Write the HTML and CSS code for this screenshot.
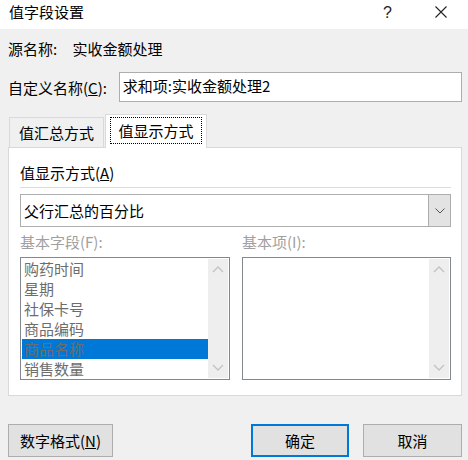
FILE: index.html
```html
<!DOCTYPE html>
<html lang="zh-CN">
<head>
    <meta charset="UTF-8">
    <title>值字段设置</title>
    <link rel="stylesheet" href="styles.css">
</head>
<body>
    <div class="dialog">
        <!-- 标题栏 -->
        <div class="titlebar">
            <span class="title">值字段设置</span>
            <span class="help">?</span>
            <svg class="close" width="12" height="12" viewBox="0 0 12 12">
                <path d="M0.5 0.5 L11.5 11.5 M11.5 0.5 L0.5 11.5" stroke="#222" stroke-width="1.1" fill="none"/>
            </svg>
        </div>

        <div class="content">
            <div class="source-row">
                <span class="source-label">源名称:</span>
                <span>实收金额处理</span>
            </div>

            <div class="name-row">
                <label class="name-label">自定义名称(<u>C</u>):</label>
                <div class="name-input">求和项:实收金额处理2</div>
            </div>

            <!-- 选项卡 -->
            <div class="tabs">
                <div class="tab">值汇总方式</div>
                <div class="tab active"><span class="focus">值显示方式</span></div>
            </div>

            <div class="panel">
                <div class="group-label">值显示方式(<u>A</u>)</div>
                <div class="separator"></div>
                <div class="combo">
                    <span class="combo-text">父行汇总的百分比</span>
                    <span class="combo-btn">
                        <svg width="10" height="6" viewBox="0 0 10 6">
                            <path d="M0.5 0.5 L5 5 L9.5 0.5" stroke="#555" stroke-width="1" fill="none"/>
                        </svg>
                    </span>
                </div>

                <div class="lists">
                    <div class="list-col">
                        <div class="list-label">基本字段(F):</div>
                        <div class="listbox">
                            <ul class="items">
                                <li>购药时间</li>
                                <li>星期</li>
                                <li>社保卡号</li>
                                <li>商品编码</li>
                                <li class="selected">商品名称</li>
                                <li>销售数量</li>
                            </ul>
                            <div class="scrollbar">
                                <svg width="12" height="7" viewBox="0 0 12 7"><path d="M1 6 L6 1 L11 6" stroke="#c2c2c2" stroke-width="1.3" fill="none"/></svg>
                                <svg width="12" height="7" viewBox="0 0 12 7"><path d="M1 1 L6 6 L11 1" stroke="#c2c2c2" stroke-width="1.3" fill="none"/></svg>
                            </div>
                        </div>
                    </div>
                    <div class="list-col">
                        <div class="list-label">基本项(I):</div>
                        <div class="listbox">
                            <ul class="items"></ul>
                            <div class="scrollbar">
                                <svg width="12" height="7" viewBox="0 0 12 7"><path d="M1 6 L6 1 L11 6" stroke="#c2c2c2" stroke-width="1.3" fill="none"/></svg>
                                <svg width="12" height="7" viewBox="0 0 12 7"><path d="M1 1 L6 6 L11 1" stroke="#c2c2c2" stroke-width="1.3" fill="none"/></svg>
                            </div>
                        </div>
                    </div>
                </div>
            </div>

            <!-- 按钮 -->
            <div class="buttons">
                <button class="btn btn-format">数字格式(<u>N</u>)</button>
                <span class="spacer"></span>
                <button class="btn btn-ok">确定</button>
                <button class="btn btn-cancel">取消</button>
            </div>
        </div>
    </div>
</body>
</html>
```

FILE: styles.css
```css
body {
    margin: 0;
    padding: 0;
    font-family: "Noto Sans CJK SC", "Liberation Sans", sans-serif;
    font-size: 15px;
    color: #000;
    background: #f0f0f0;
}
.dialog {
    width: 468px;
    height: 460px;
    overflow: hidden;
}
.titlebar {
    height: 29px;
    background: #fff;
    display: flex;
    align-items: center;
}
.title {
    padding-left: 9px;
    line-height: 20px;
    margin-top: -5px;
}
.help {
    margin-left: auto;
    margin-top: -4px;
    font-family: "Liberation Sans", sans-serif;
    font-size: 16px;
    color: #222;
}
.close {
    margin: -5px 21px 0 43px;
}
.content {
    padding: 0 6px 0 8px;
}
.source-row {
    margin-top: 10px;
    height: 20px;
    line-height: 20px;
}
.source-label {
    display: inline-block;
    width: 61px;
}
.name-row {
    margin-top: 13px;
    display: flex;
    align-items: center;
    height: 30px;
}
.name-label {
    width: 111px;
    line-height: 20px;
    padding-top: 1px;
}
.name-input {
    width: 339px;
    height: 28px;
    line-height: 26px;
    border: 1px solid #adadad;
    background: #fff;
    padding-left: 3px;
    box-sizing: content-box;
}
.tabs {
    margin-top: 13px;
    height: 32px;
    display: flex;
    align-items: flex-end;
    position: relative;
    z-index: 1;
}
.tab {
    margin-left: 1px;
    width: 93px;
    height: 29px;
    border: 1px solid #d9d9d9;
    border-bottom: none;
    text-align: center;
    line-height: 30px;
}
.tab.active {
    margin-left: 1px;
    width: 100px;
    height: 33px;
    background: #fff;
    margin-bottom: -1px;
    display: flex;
    align-items: center;
    justify-content: center;
}
.focus {
    display: block;
    width: 90px;
    height: 25px;
    line-height: 25px;
    border: 1px dotted #000;
    margin-top: -2px;
}
.panel {
    width: 431px;
    height: 232px;
    background: #fff;
    border: 1px solid #d9d9d9;
    padding: 15px 10px 0 11px;
}
.group-label {
    line-height: 20px;
}
.separator {
    margin-top: 4px;
    height: 1px;
    background: #dcdcdc;
}
.combo {
    margin-top: 6px;
    height: 31px;
    border: 1px solid #adadad;
    display: flex;
    align-items: stretch;
}
.combo-text {
    flex: 1;
    padding-left: 3px;
    line-height: 31px;
}
.combo-btn {
    width: 21px;
    background: #e3e3e3;
    border-left: 1px solid #adadad;
    display: flex;
    align-items: center;
    justify-content: center;
}
.lists {
    display: flex;
    gap: 12px;
    margin-top: 5px;
}
.list-label {
    line-height: 20px;
    color: #a0a0a0;
}
.list-col:first-child .listbox {
    width: 210px;
}
.list-col:last-child .listbox {
    width: 209px;
}
.listbox {
    margin-top: 5px;
    height: 123px;
    border: 1px solid #828790;
    background: #fff;
    display: flex;
    padding: 1px;
    box-sizing: border-box;
}
.items {
    flex: 1;
    list-style: none;
    margin: 0;
    padding: 0;
}
.items li {
    height: 20px;
    line-height: 20px;
    padding-left: 2px;
    color: #6d6d6d;
}
.items li.selected {
    background: #0078d7;
}
.scrollbar {
    width: 20px;
    background: #eeeeee;
    display: flex;
    flex-direction: column;
    justify-content: space-between;
    align-items: center;
    padding: 7px 0;
}
.buttons {
    margin-top: 28px;
    display: flex;
    align-items: center;
}
.btn {
    font-family: "Noto Sans CJK SC", "Liberation Sans", sans-serif;
    font-size: 15px;
    height: 33px;
    background: #e1e1e1;
    border: 1px solid #adadad;
    padding: 0;
    color: #000;
}
.btn-format {
    width: 105px;
}
.spacer {
    flex: 1;
}
.btn-ok {
    width: 98px;
    border: 2px solid #0078d7;
}
.btn-cancel {
    width: 99px;
    margin-left: 14px;
}
```
